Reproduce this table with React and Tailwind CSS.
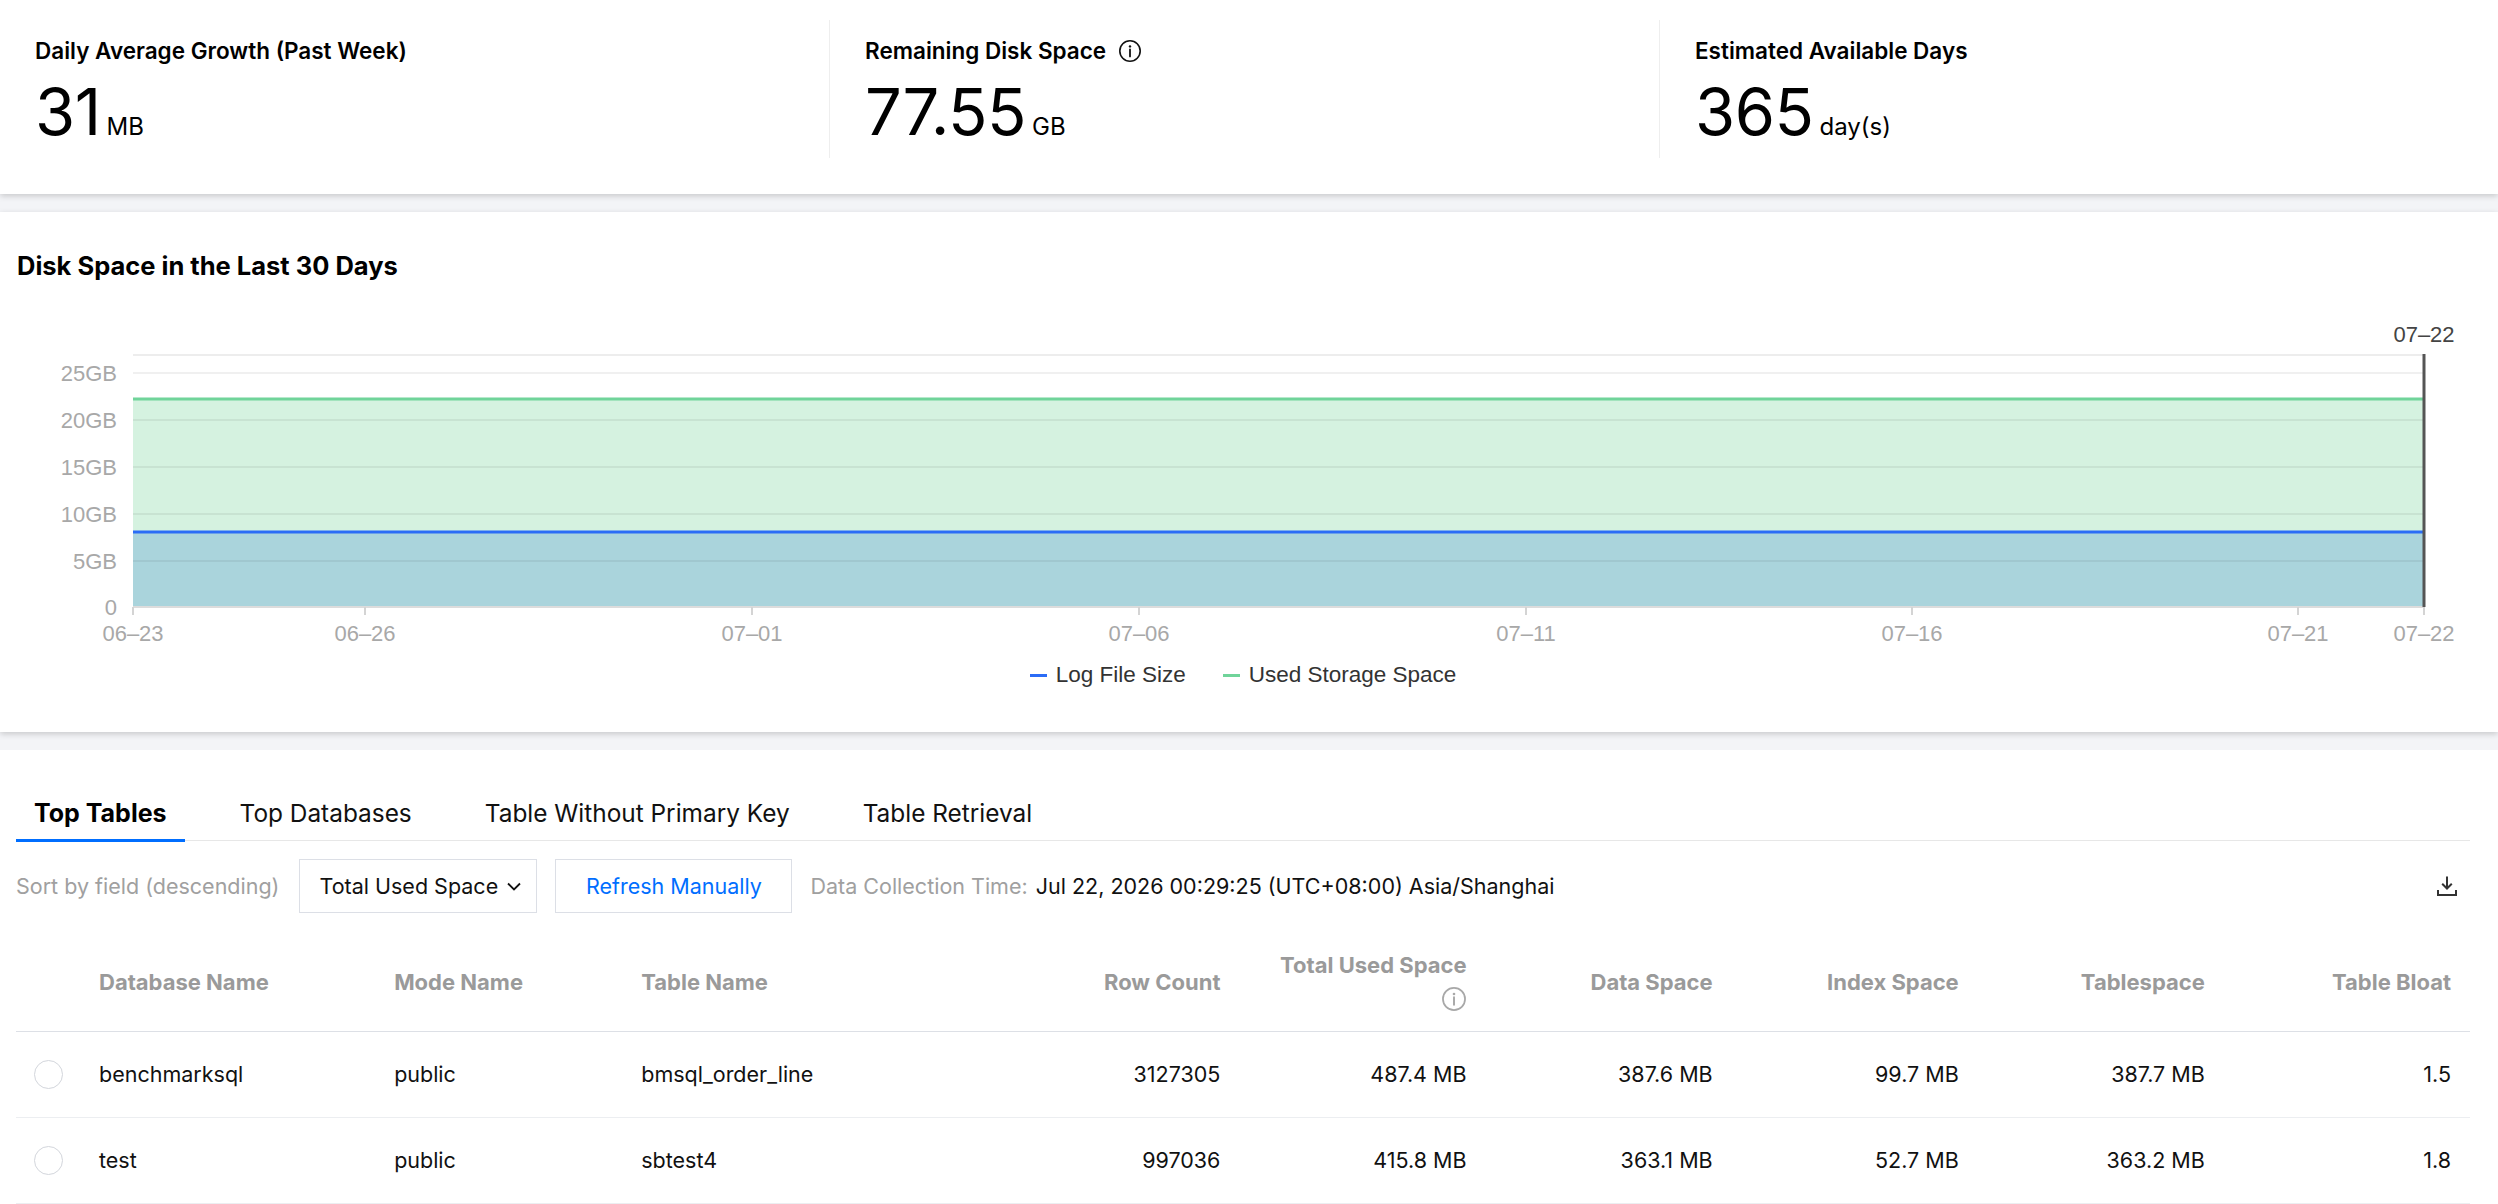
import { useState } from 'react';

const UI = "font-['Inter','Noto_Sans',sans-serif]";
const NUM = "font-['Liberation_Sans',Arial,sans-serif]";

const InfoIcon = ({ className }) => (
  <svg viewBox="0 0 24 24" className={className} fill="none">
    <circle cx="12" cy="12" r="10.2" stroke="currentColor" strokeWidth="1.6" />
    <circle cx="12" cy="7.4" r="1.2" fill="currentColor" />
    <path d="M12 10.4V17.4" stroke="currentColor" strokeWidth="1.8" strokeLinecap="round" />
  </svg>
);

const stats = [
  { title: 'Daily Average Growth (Past Week)', value: '31', unit: 'MB' },
  { title: 'Remaining Disk Space', value: '77.55', unit: 'GB', info: true },
  { title: 'Estimated Available Days', value: '365', unit: 'day(s)' },
];

const yTicks = [
  ['25GB', 53],
  ['20GB', 100],
  ['15GB', 147],
  ['10GB', 194],
  ['5GB', 241],
  ['0', 287],
];

const xTicks = [
  ['06–23', 117],
  ['06–26', 349],
  ['07–01', 736],
  ['07–06', 1123],
  ['07–11', 1510],
  ['07–16', 1896],
  ['07–21', 2282],
  ['07–22', 2408],
];

const tabs = ['Top Tables', 'Top Databases', 'Table Without Primary Key', 'Table Retrieval'];

const columns = [
  { key: 'db', label: 'Database Name', width: 295 },
  { key: 'mode', label: 'Mode Name', width: 247 },
  { key: 'table', label: 'Table Name', width: 371 },
  { key: 'rows', label: 'Row Count', width: 246, right: true },
  { key: 'total', label: 'Total Used Space', width: 246, right: true, info: true },
  { key: 'data', label: 'Data Space', width: 246, right: true },
  { key: 'index', label: 'Index Space', width: 246, right: true },
  { key: 'tablespace', label: 'Tablespace', width: 246, right: true },
  { key: 'bloat', label: 'Table Bloat', width: 246, right: true },
];

const rows = [
  {
    db: 'benchmarksql',
    mode: 'public',
    table: 'bmsql_order_line',
    rows: '3127305',
    total: '487.4 MB',
    data: '387.6 MB',
    index: '99.7 MB',
    tablespace: '387.7 MB',
    bloat: '1.5',
  },
  {
    db: 'test',
    mode: 'public',
    table: 'sbtest4',
    rows: '997036',
    total: '415.8 MB',
    data: '363.1 MB',
    index: '52.7 MB',
    tablespace: '363.2 MB',
    bloat: '1.8',
  },
];

function StatsCard() {
  return (
    <section className="bg-white pt-[20px] pb-[36px] shadow-[0_2px_6px_rgba(0,0,0,0.18)] relative z-10">
      <div className="grid grid-cols-[829px_830px_1fr]">
        {stats.map((s, i) => (
          <div
            key={s.title}
            className={`h-[138px] pl-[35px] pt-[17px] ${i > 0 ? 'border-l border-[#eeeeee]' : ''}`}
          >
            <div className="flex items-center gap-[12px] h-[28px]">
              <span className="text-[22.5px] leading-[28px] font-semibold text-black">{s.title}</span>
              {s.info && <InfoIcon className="w-[24px] h-[24px] text-[#111]" />}
            </div>
            <div className="mt-[15px] flex items-baseline text-black">
              <span className="text-[65px] leading-[64px] tracking-[-0.5px]">{s.value}</span>
              <span className="text-[24px] ml-[6px]">{s.unit}</span>
            </div>
          </div>
        ))}
      </div>
    </section>
  );
}

function DiskChart() {
  const x0 = 117;
  const x1 = 2408;
  const yBase = 287;
  const yGreen = 79;
  const yBlue = 212;
  return (
    <svg width="2454" height="330" viewBox="0 0 2454 330" className="block">
      {/* areas */}
      <rect x={x0} y={yGreen} width={x1 - x0} height={yBase - yGreen} fill="#d5f2e0" />
      <rect x={x0} y={yBlue} width={x1 - x0} height={yBase - yBlue} fill="#aad4dc" />
      {/* grid */}
      <line x1={x0} x2={x1} y1={35} y2={35} stroke="#000" strokeOpacity="0.07" strokeWidth="2" />
      {yTicks.slice(0, 5).map(([label, y]) => (
        <line key={label} x1={x0} x2={x1} y1={y} y2={y} stroke="#000" strokeOpacity="0.06" strokeWidth="2" />
      ))}
      {/* series lines */}
      <line x1={x0} x2={x1} y1={yGreen} y2={yGreen} stroke="#70d49a" strokeWidth="3" />
      <line x1={x0} x2={x1} y1={yBlue} y2={yBlue} stroke="#2b6cf6" strokeWidth="3" />
      {/* axis */}
      <line x1={x0} x2={x1} y1={yBase} y2={yBase} stroke="#dcdcdc" strokeWidth="2" />
      {xTicks.map(([label, x]) => (
        <line key={label + 't'} x1={x} x2={x} y1={yBase} y2={yBase + 8} stroke="#d4d4d4" strokeWidth="2" />
      ))}
      {/* pointer */}
      <line x1={x1} x2={x1} y1={34} y2={yBase} stroke="#555" strokeWidth="3" />
      <g fontFamily="Liberation Sans, Arial, sans-serif" fontSize="22">
        {yTicks.map(([label, y]) => (
          <text key={label} x={101} y={y} textAnchor="end" dominantBaseline="central" fill="#a8a8a8">
            {label}
          </text>
        ))}
        {xTicks.map(([label, x]) => (
          <text key={label} x={x} y={313} textAnchor="middle" dominantBaseline="central" fill="#a8a8a8">
            {label}
          </text>
        ))}
        <text x={x1} y={14} textAnchor="middle" dominantBaseline="central" fill="#444">
          07–22
        </text>
      </g>
    </svg>
  );
}

function ChartCard() {
  return (
    <section className="bg-white pl-[16px] pr-[28px] pt-[38px] pb-[42px] shadow-[0_2px_6px_rgba(0,0,0,0.18)] relative z-10">
      <h2 className="text-[25.5px] leading-[32px] font-bold text-black pl-[1px]">
        Disk Space in the Last 30 Days
      </h2>
      <div className="mt-[38px]">
        <DiskChart />
      </div>
      <div className={`${NUM} mt-[10px] flex justify-center items-center h-[30px] text-[22.5px] text-[#333]`}>
        <span className="flex items-center">
          <span className="w-[17px] h-[3px] bg-[#2b6cf6] mr-[9px]" />
          Log File Size
        </span>
        <span className="flex items-center ml-[37px]">
          <span className="w-[17px] h-[3px] bg-[#70d49a] mr-[9px]" />
          Used Storage Space
        </span>
      </div>
    </section>
  );
}

function Radio() {
  return <span className="block w-[29px] h-[29px] rounded-full border border-[#d3d6dc] bg-white" />;
}

function TableCard() {
  const [active, setActive] = useState(0);
  return (
    <section className="bg-white pl-[16px] pr-[28px] pt-[47px]">
      <div className="flex gap-[37px] border-b border-[#e7e7e7] h-[44px]">
        {tabs.map((t, i) => (
          <button
            key={t}
            onClick={() => setActive(i)}
            className={`relative px-[18px] h-[44px] leading-[32px] self-start pb-[12px] ${
              i === active ? 'text-[25px] font-bold text-black' : 'text-[24.4px] text-[#111]'
            }`}
          >
            {t}
            {i === active && <span className="absolute left-0 right-0 bottom-[-1px] h-[3px] bg-[#006eff]" />}
          </button>
        ))}
      </div>

      <div className="mt-[18px] flex items-center h-[54px] text-[21.5px]">
        <span className="text-[#a0a0a0]">Sort by field (descending)</span>
        <button className="ml-[20px] w-[238px] h-[54px] border border-[#dcdfe6] flex items-center justify-between pl-[19px] pr-[12px] text-[#111]">
          Total Used Space
          <svg viewBox="0 0 20 20" className="w-[20px] h-[20px]" fill="none">
            <path d="M4 7.5l6 6 6-6" stroke="#111" strokeWidth="1.8" />
          </svg>
        </button>
        <button className="ml-[18px] w-[237px] h-[54px] border border-[#dcdfe6] text-[#006eff]">
          Refresh Manually
        </button>
        <span className="ml-[18px] text-[#a0a0a0]">Data Collection Time:</span>
        <span className="ml-[8px] text-[#111]">Jul 22, 2026 00:29:25 (UTC+08:00) Asia/Shanghai</span>
        <button className="ml-auto mr-[11px] w-[24px] h-[24px] text-[#333]">
          <svg viewBox="0 0 24 24" className="w-[24px] h-[24px]" fill="none">
            <path d="M12 2.5V14.5M7.2 9.8L12 14.5L16.8 9.8" stroke="currentColor" strokeWidth="2" />
            <path d="M3 16V21H21V16" stroke="currentColor" strokeWidth="2" />
          </svg>
        </button>
      </div>

      <table className="mt-[19px] w-full table-fixed border-collapse text-[21.5px]">
        <colgroup>
          <col className="w-[64px]" />
          {columns.map(c => (
            <col key={c.key} style={{ width: c.width }} />
          ))}
        </colgroup>
        <thead>
          <tr className="border-b border-[#dde0e6]">
            <th className="py-[19px]" />
            {columns.map(c => (
              <th
                key={c.key}
                className={`px-[19px] py-[19px] text-[22px] font-bold text-[#9a9a9a] leading-[28px] ${c.right ? 'text-right' : 'text-left'}`}
              >
                {c.info ? (
                  <div className="flex flex-col items-end gap-[7px]">
                    <span className="whitespace-nowrap">{c.label}</span>
                    <InfoIcon className="w-[26px] h-[26px] text-[#a8a8a8]" />
                  </div>
                ) : (
                  c.label
                )}
              </th>
            ))}
          </tr>
        </thead>
        <tbody>
          {rows.map(r => (
            <tr key={r.table} className="border-b border-[#eceef1] h-[86px]">
              <td className="pl-[18px]">
                <Radio />
              </td>
              {columns.map(c => (
                <td
                  key={c.key}
                  className={`px-[19px] text-[#111] ${c.right ? 'text-right' : 'text-left'}`}
                >
                  {r[c.key]}
                </td>
              ))}
            </tr>
          ))}
        </tbody>
      </table>
    </section>
  );
}

export default function App() {
  return (
    <div className={`${UI} min-h-screen bg-[#f3f4f7] flex flex-col gap-[18px] w-[2498px]`}>
      <StatsCard />
      <ChartCard />
      <TableCard />
    </div>
  );
}
